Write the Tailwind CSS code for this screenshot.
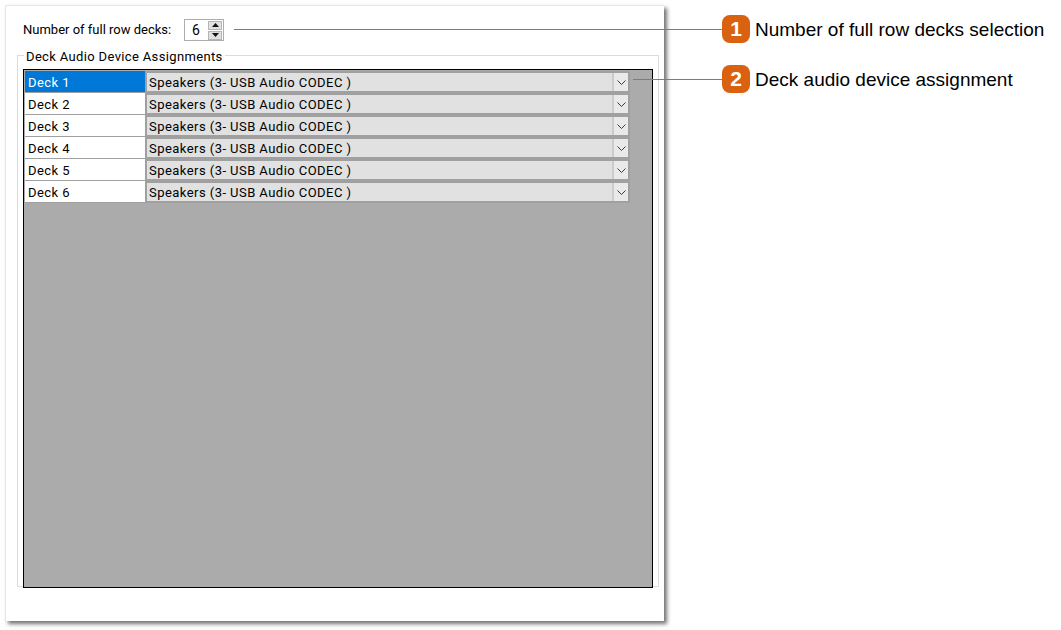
<!DOCTYPE html>
<html lang="en">
<head>
  <meta charset="UTF-8">
  <title>Deck Audio Device Assignments</title>
  <script src="https://cdn.jsdelivr.net/npm/@tailwindcss/browser@4"></script>
</head>
<body class="relative w-[1061px] h-[630px] overflow-hidden bg-white font-['Roboto',sans-serif] text-[13px] text-black">
  <!-- dialog -->
  <div class="ml-[5px] mt-[5px] w-[659px] h-[616px] bg-white border-l border-t border-[#e6e6e6] shadow-[3px_3px_4px_rgba(0,0,0,0.55)] pl-[11px] pt-[11px]">
    <div class="flex items-center h-[26px] pl-[6px]">
      <span class="w-[161px]">Number of full row decks:</span>
      <div class="flex items-center w-[40px] h-[22px] border border-[#adadad] pl-[7px] pr-px">
        <span class="flex-1 text-[14px]">6</span>
        <div class="flex flex-col gap-px">
          <div class="w-[14px] h-[9px] bg-[#e1e1e1] border border-[#b5b5b5] flex items-center justify-center">
            <svg width="7" height="4" viewBox="0 0 7 4"><path d="M3.5 0 7 4H0z" fill="#111"/></svg>
          </div>
          <div class="w-[14px] h-[9px] bg-[#e1e1e1] border border-[#b5b5b5] flex items-center justify-center">
            <svg width="7" height="4" viewBox="0 0 7 4"><path d="M0 0h7L3.500 4z" fill="#111"/></svg>
          </div>
        </div>
      </div>
    </div>
    <!-- group box -->
    <div class="relative mt-[12px] w-[642px] h-[532px] border border-[#dcdcdc] pl-[5px] pt-[13px]">
      <span class="absolute left-[6px] top-[-7px] bg-white px-[2px] leading-[16px] tracking-[0.35px]">Deck Audio Device Assignments</span>
      <div class="w-[630px] h-[519px] bg-[#ababab] border border-black pl-px pt-px">
        <div class="flex h-[22px]">
          <div class="w-[121px] bg-[#0078d7] text-white border-b border-r border-[#a0a0a0] pl-[3px] leading-[23px] tracking-[0.45px]">Deck 1</div>
          <div class="flex w-[484px] h-[22px] bg-[#e1e1e1] border-2 border-[#a0a0a0] border-l-[1px] pl-[2px] leading-[20px] tracking-[0.45px]">
            <span class="flex-1">Speakers (3- USB Audio CODEC )</span>
            <div class="w-[16px] border-l-2 border-[#a0a0a0]/40 bg-[#e9e9e9] flex items-center justify-center">
              <svg width="9" height="5" viewBox="0 0 9 5"><path d="M.5.5l4 4 4-4" fill="none" stroke="#3c3c3c"/></svg>
            </div>
          </div>
        </div>
        <div class="flex h-[22px]">
          <div class="w-[121px] bg-white border-b border-r border-[#a0a0a0] pl-[3px] leading-[23px] tracking-[0.45px]">Deck 2</div>
          <div class="flex w-[484px] h-[22px] bg-[#e1e1e1] border-2 border-[#a0a0a0] border-l-[1px] pl-[2px] leading-[20px] tracking-[0.45px]">
            <span class="flex-1">Speakers (3- USB Audio CODEC )</span>
            <div class="w-[16px] border-l-2 border-[#a0a0a0]/40 bg-[#e9e9e9] flex items-center justify-center">
              <svg width="9" height="5" viewBox="0 0 9 5"><path d="M.5.5l4 4 4-4" fill="none" stroke="#3c3c3c"/></svg>
            </div>
          </div>
        </div>
        <div class="flex h-[22px]">
          <div class="w-[121px] bg-white border-b border-r border-[#a0a0a0] pl-[3px] leading-[23px] tracking-[0.45px]">Deck 3</div>
          <div class="flex w-[484px] h-[22px] bg-[#e1e1e1] border-2 border-[#a0a0a0] border-l-[1px] pl-[2px] leading-[20px] tracking-[0.45px]">
            <span class="flex-1">Speakers (3- USB Audio CODEC )</span>
            <div class="w-[16px] border-l-2 border-[#a0a0a0]/40 bg-[#e9e9e9] flex items-center justify-center">
              <svg width="9" height="5" viewBox="0 0 9 5"><path d="M.5.5l4 4 4-4" fill="none" stroke="#3c3c3c"/></svg>
            </div>
          </div>
        </div>
        <div class="flex h-[22px]">
          <div class="w-[121px] bg-white border-b border-r border-[#a0a0a0] pl-[3px] leading-[23px] tracking-[0.45px]">Deck 4</div>
          <div class="flex w-[484px] h-[22px] bg-[#e1e1e1] border-2 border-[#a0a0a0] border-l-[1px] pl-[2px] leading-[20px] tracking-[0.45px]">
            <span class="flex-1">Speakers (3- USB Audio CODEC )</span>
            <div class="w-[16px] border-l-2 border-[#a0a0a0]/40 bg-[#e9e9e9] flex items-center justify-center">
              <svg width="9" height="5" viewBox="0 0 9 5"><path d="M.5.5l4 4 4-4" fill="none" stroke="#3c3c3c"/></svg>
            </div>
          </div>
        </div>
        <div class="flex h-[22px]">
          <div class="w-[121px] bg-white border-b border-r border-[#a0a0a0] pl-[3px] leading-[23px] tracking-[0.45px]">Deck 5</div>
          <div class="flex w-[484px] h-[22px] bg-[#e1e1e1] border-2 border-[#a0a0a0] border-l-[1px] pl-[2px] leading-[20px] tracking-[0.45px]">
            <span class="flex-1">Speakers (3- USB Audio CODEC )</span>
            <div class="w-[16px] border-l-2 border-[#a0a0a0]/40 bg-[#e9e9e9] flex items-center justify-center">
              <svg width="9" height="5" viewBox="0 0 9 5"><path d="M.5.5l4 4 4-4" fill="none" stroke="#3c3c3c"/></svg>
            </div>
          </div>
        </div>
        <div class="flex h-[22px]">
          <div class="w-[121px] bg-white border-b border-r border-[#a0a0a0] pl-[3px] leading-[23px] tracking-[0.45px]">Deck 6</div>
          <div class="flex w-[484px] h-[22px] bg-[#e1e1e1] border-2 border-[#a0a0a0] border-l-[1px] pl-[2px] leading-[20px] tracking-[0.45px]">
            <span class="flex-1">Speakers (3- USB Audio CODEC )</span>
            <div class="w-[16px] border-l-2 border-[#a0a0a0]/40 bg-[#e9e9e9] flex items-center justify-center">
              <svg width="9" height="5" viewBox="0 0 9 5"><path d="M.5.5l4 4 4-4" fill="none" stroke="#3c3c3c"/></svg>
            </div>
          </div>
        </div>
      </div>
    </div>
  </div>

  <!-- callouts over the screenshot -->
  <div class="absolute left-[234px] top-[29px] w-[488px] h-px bg-[#d9610f]"></div>
  <div class="absolute left-[722px] top-[15px] w-[28px] h-[28px] rounded-[8px] bg-[#d9610f] text-white font-bold text-[21px] leading-[28px] text-center font-['Liberation_Sans',sans-serif]">1</div>
  <div class="absolute left-[755px] top-[19px] text-[19px] leading-[22px] whitespace-nowrap font-['Liberation_Sans',sans-serif]">Number of full row decks selection</div>
  <div class="absolute left-[633px] top-[79px] w-[89px] h-px bg-[#d9610f]"></div>
  <div class="absolute left-[722px] top-[65px] w-[28px] h-[28px] rounded-[8px] bg-[#d9610f] text-white font-bold text-[21px] leading-[28px] text-center font-['Liberation_Sans',sans-serif]">2</div>
  <div class="absolute left-[755px] top-[69px] text-[19px] leading-[22px] whitespace-nowrap font-['Liberation_Sans',sans-serif]">Deck audio device assignment</div>
</body>
</html>
